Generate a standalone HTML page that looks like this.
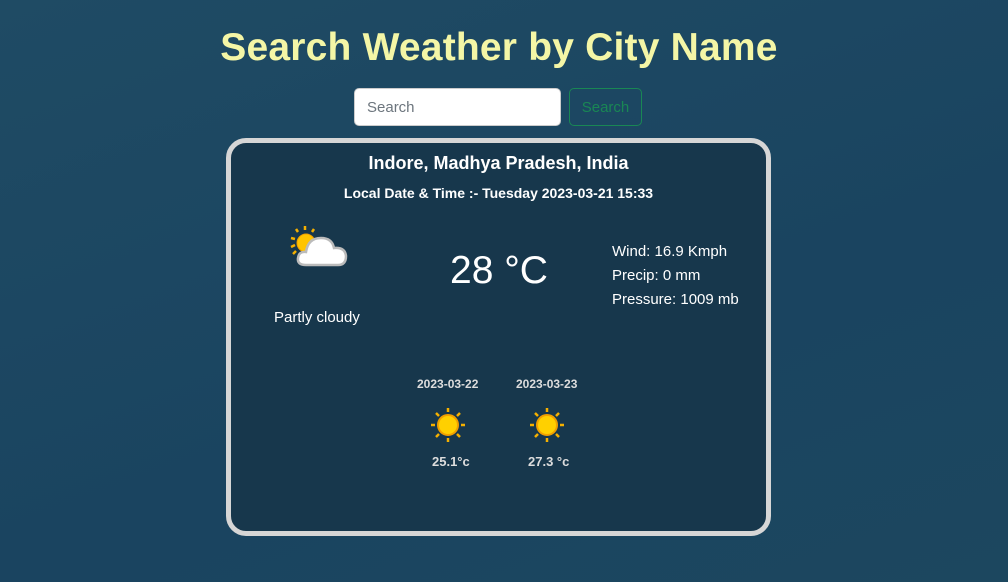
<!DOCTYPE html>
<html><head><meta charset="utf-8"><style>
*{margin:0;padding:0;box-sizing:border-box}
body{width:1008px;height:582px;overflow:hidden;background:linear-gradient(160deg,#1f4b64,#1a4460 60%,#1c475f);font-family:"Liberation Sans",sans-serif;position:relative}
.a{position:absolute}
h1{position:absolute;left:0;width:998px;top:26px;text-align:center;color:#f4f6a6;font-size:39px;font-weight:bold;letter-spacing:0.2px}
.inp{left:354px;top:88px;width:207px;height:38px;background:#fff;border:1px solid #ccc;border-radius:5px;color:#6c757d;font-size:15px;padding:10px 12px}
.btn{left:569px;top:88px;width:73px;height:38px;border:1px solid #198754;border-radius:5px;color:#198754;font-size:15px;text-align:center;padding-top:10px}
.card{left:226px;top:138px;width:545px;height:398px;border:5px solid #d6d6d6;border-radius:20px;background:#17374c}
.w{color:#fff;text-align:center}
</style></head><body>
<h1>Search Weather by City Name</h1>
<div class="a inp">Search</div>
<div class="a btn">Search</div>
<div class="a card"></div>
<div class="a w" style="left:226px;width:545px;top:153px;font-size:18px;font-weight:bold">Indore, Madhya Pradesh, India</div>
<div class="a w" style="left:226px;width:545px;top:185px;font-size:14px;font-weight:bold">Local Date &amp; Time :- Tuesday 2023-03-21 15:33</div>
<svg class="a" style="left:288px;top:224px" width="60" height="44" viewBox="0 0 60 44">
<g stroke="#f5b000" stroke-width="2.5"><line x1="17" y1="2" x2="17" y2="6"/><line x1="8" y1="5" x2="10" y2="8"/><line x1="26" y1="5" x2="24" y2="8"/><line x1="3" y1="14" x2="7" y2="15"/><line x1="3" y1="23" x2="7" y2="21"/><line x1="5" y1="30" x2="8" y2="27"/></g>
<circle cx="18" cy="19" r="9" fill="#ffc400" stroke="#f0a000"/>
<path d="M18 41 Q9 41 10 34 Q11 27 18 28 Q20 14 33 14 Q44 14 46 24 Q57 23 58 32 Q58 41 50 41 Z" fill="#fff" stroke="#bbb" stroke-width="2.5"/>
</svg>
<div class="a" style="left:274px;top:309px;color:#fff;font-size:15px">Partly cloudy</div>
<div class="a w" style="left:440px;width:118px;top:249px;font-size:39px">28 °C</div>
<div class="a" style="left:612px;top:240px;color:#fff;font-size:15px;line-height:24px">Wind: 16.9 Kmph<br>Precip: 0 mm<br>Pressure: 1009 mb</div>
<div class="a" style="left:417px;top:377px;color:#ddd;font-size:12px;font-weight:bold">2023-03-22</div>
<div class="a" style="left:516px;top:377px;color:#ddd;font-size:12px;font-weight:bold">2023-03-23</div>
<svg class="a" style="left:430px;top:407px" width="36" height="36" viewBox="0 0 36 36"><g stroke="#f5b000" stroke-width="2.5"><line x1="18" y1="1" x2="18" y2="5"/><line x1="18" y1="31" x2="18" y2="35"/><line x1="1" y1="18" x2="5" y2="18"/><line x1="31" y1="18" x2="35" y2="18"/><line x1="6" y1="6" x2="9" y2="9"/><line x1="30" y1="6" x2="27" y2="9"/><line x1="6" y1="30" x2="9" y2="27"/><line x1="30" y1="30" x2="27" y2="27"/></g><circle cx="18" cy="18" r="10" fill="#ffd000" stroke="#f0a000" stroke-width="2"/></svg>
<svg class="a" style="left:529px;top:407px" width="36" height="36" viewBox="0 0 36 36"><g stroke="#f5b000" stroke-width="2.5"><line x1="18" y1="1" x2="18" y2="5"/><line x1="18" y1="31" x2="18" y2="35"/><line x1="1" y1="18" x2="5" y2="18"/><line x1="31" y1="18" x2="35" y2="18"/><line x1="6" y1="6" x2="9" y2="9"/><line x1="30" y1="6" x2="27" y2="9"/><line x1="6" y1="30" x2="9" y2="27"/><line x1="30" y1="30" x2="27" y2="27"/></g><circle cx="18" cy="18" r="10" fill="#ffd000" stroke="#f0a000" stroke-width="2"/></svg>
<div class="a" style="left:432px;top:454px;color:#ddd;font-size:13px;font-weight:bold">25.1°c</div>
<div class="a" style="left:528px;top:454px;color:#ddd;font-size:13px;font-weight:bold">27.3 °c</div>
</body></html>
